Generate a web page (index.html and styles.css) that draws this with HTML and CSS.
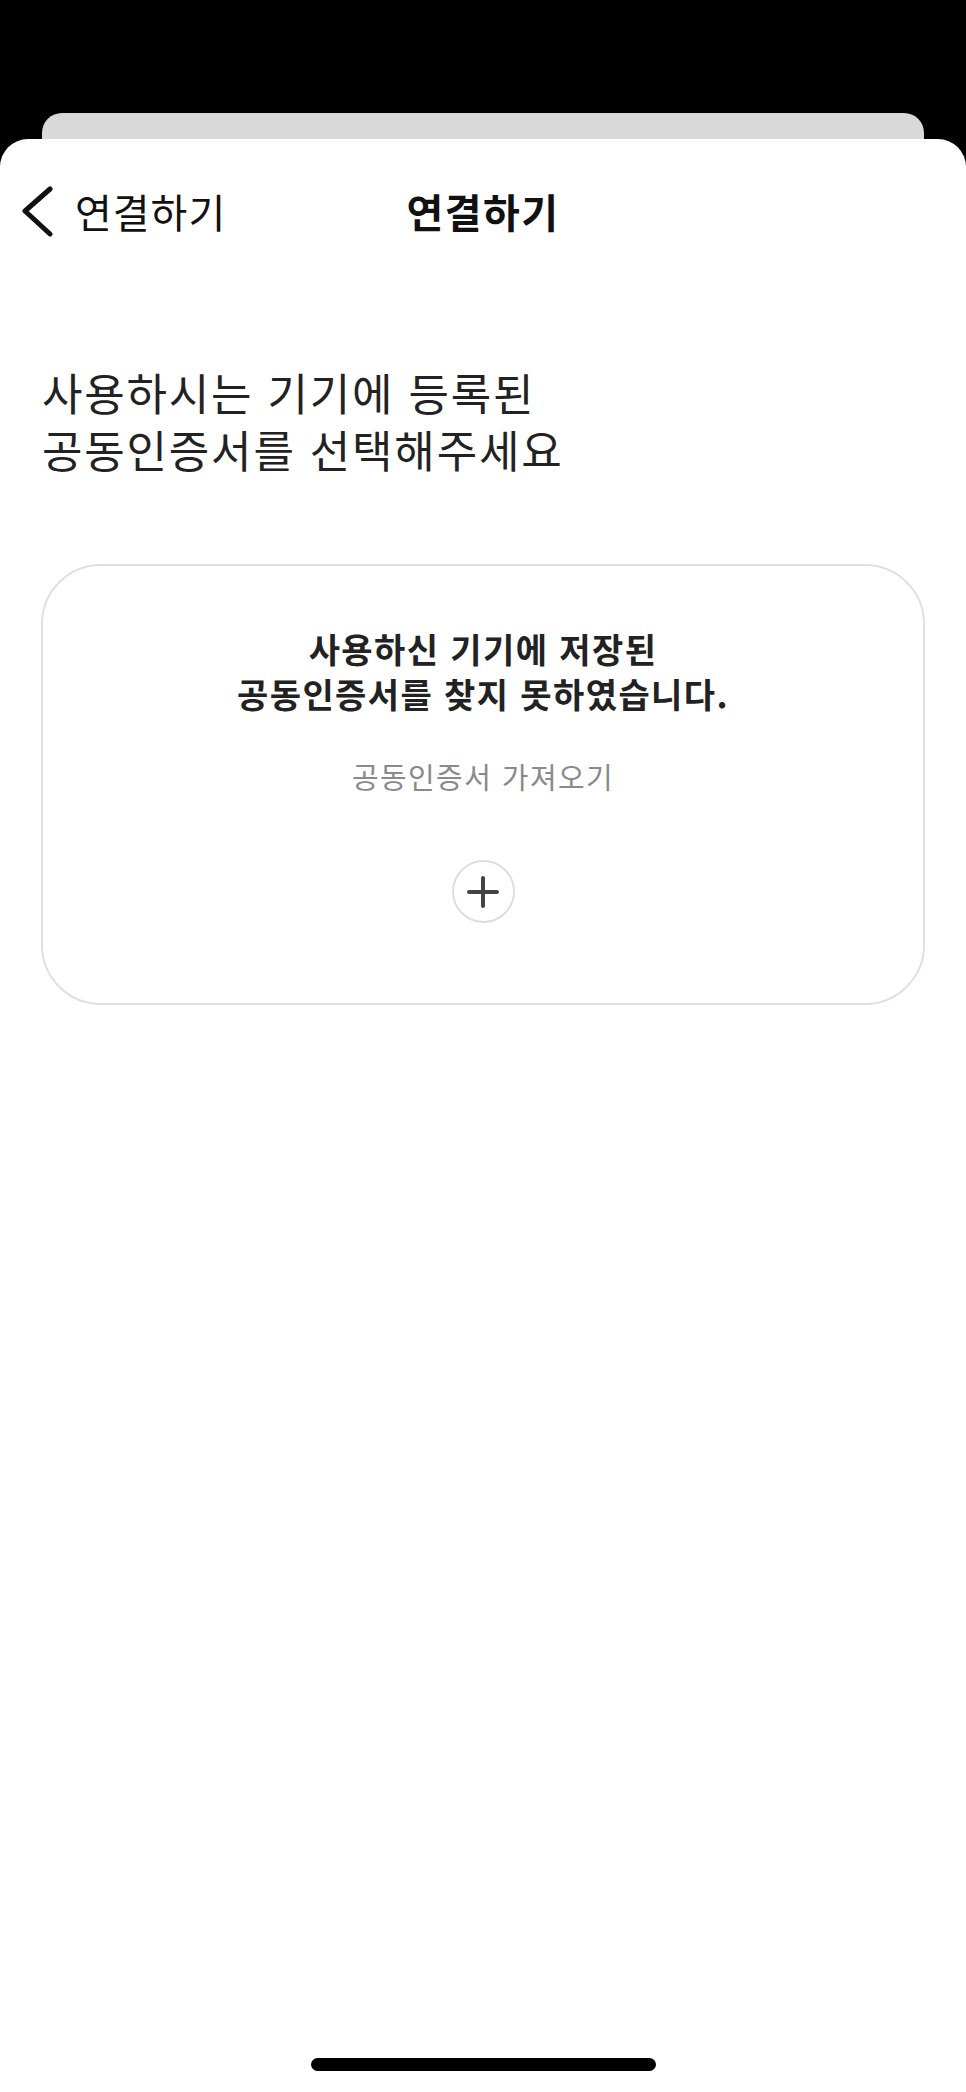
FILE: index.html
```html
<!DOCTYPE html>
<html lang="ko">
<head>
<meta charset="utf-8">
<title>연결하기</title>
<link rel="stylesheet" href="styles.css">
</head>
<body>
<div class="screen">
  <div class="back-card"></div>
  <main class="sheet">
    <header class="nav">
      <div class="nav-back">
        <svg class="chevron" width="36" height="52" viewBox="0 0 36 52" aria-hidden="true">
          <path d="M32 4 L7 26 L32 49" fill="none" stroke="#111" stroke-width="5" stroke-linecap="round" stroke-linejoin="round"/>
        </svg>
        <span class="back-label">연결하기</span>
      </div>
      <h1 class="nav-title">연결하기</h1>
      <div class="nav-spacer"></div>
    </header>

    <p class="heading">사용하시는 기기에 등록된<br>공동인증서를 선택해주세요</p>

    <section class="card">
      <p class="card-title">사용하신 기기에 저장된<br>공동인증서를 찾지 못하였습니다.</p>
      <p class="card-sub">공동인증서 가져오기</p>
      <button class="add-btn" type="button" aria-label="공동인증서 가져오기">
        <svg width="32" height="32" viewBox="0 0 32 32" aria-hidden="true">
          <path d="M16 2 V30 M2 16 H30" fill="none" stroke="#444" stroke-width="4" stroke-linecap="round"/>
        </svg>
      </button>
    </section>

    <div class="home-indicator"></div>
  </main>
</div>
</body>
</html>
```

FILE: styles.css
```css
html, body {
  margin: 0;
  padding: 0;
  background: #000;
}

body {
  font-family: "Noto Sans CJK KR", "Noto Sans", sans-serif;
  color: #1e1e1e;
  overflow: hidden;
}

.screen {
  width: 966px;
  height: 2092px;
  padding-top: 113px;
  box-sizing: border-box;
  display: flex;
  flex-direction: column;
}

.back-card {
  height: 26px;
  margin: 0 42px;
  background: #d9d9d9;
  border-radius: 20px 20px 0 0;
  flex: none;
}

.sheet {
  flex: 1;
  background: #fff;
  border-radius: 28px 28px 0 0;
  display: flex;
  flex-direction: column;
}

.nav {
  margin-top: 30px;
  height: 84px;
  display: grid;
  grid-template-columns: 1fr auto 1fr;
  align-items: center;
}

.nav-back {
  display: flex;
  align-items: center;
  padding-left: 18px;
  gap: 21px;
}

.chevron {
  display: block;
  flex: none;
}

.back-label {
  font-size: 40px;
  line-height: 84px;
  letter-spacing: 1px;
  color: #111;
}

.nav-title {
  margin: 0;
  font-size: 40px;
  line-height: 84px;
  font-weight: 700;
  letter-spacing: 1.5px;
  color: #111;
}

.heading {
  margin: 111px 0 0 42px;
  font-size: 44px;
  line-height: 57px;
  letter-spacing: 1.8px;
  color: #222;
}

.card {
  margin: 86px 41px 0;
  border: 2px solid #e0e0e0;
  border-radius: 60px;
  padding: 60px 0 80px;
  display: flex;
  flex-direction: column;
  align-items: center;
}

.card-title {
  margin: 0;
  font-size: 34px;
  line-height: 45px;
  font-weight: 700;
  letter-spacing: 1.4px;
  text-align: center;
  color: #222;
}

.card-sub {
  margin: 40px 0 0;
  font-size: 29px;
  line-height: 40px;
  letter-spacing: 1.4px;
  color: #8a8a8a;
}

.add-btn {
  margin-top: 64px;
  width: 63px;
  height: 63px;
  border: 2px solid #dedede;
  border-radius: 50%;
  background: #fff;
  padding: 0;
  display: flex;
  align-items: center;
  justify-content: center;
}

.add-btn svg {
  display: block;
}

.home-indicator {
  margin: auto auto 21px;
  width: 345px;
  height: 13px;
  border-radius: 7px;
  background: #000;
}
```
